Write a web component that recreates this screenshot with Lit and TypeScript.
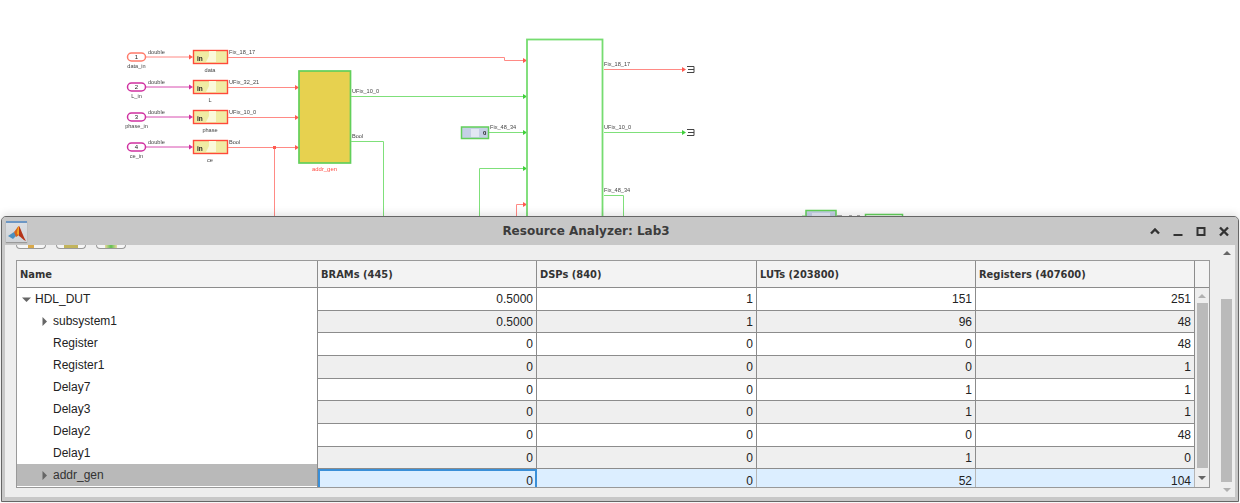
import { LitElement, html, css, svg } from "lit";
import { customElement } from "lit/decorators.js";

const RED = "#ff8a85";
const GRN = "#7fe07a";
const PINK = "#d84fb0";

const arrow = (x: number, y: number, c: string) =>
  svg`<polygon points="${x - 4},${y - 2.5} ${x},${y} ${x - 4},${y + 2.5}" fill="${c}"/>`;
const lbl = (x: number, y: number, t: string, c = "#444", a = "start", s = 5.6) =>
  svg`<text x="${x}" y="${y}" fill="${c}" text-anchor="${a}" font-size="${s}">${t}</text>`;

const inputs = [
  { y: 57, n: "1", name: "data_in", blk: "data", type: "Fix_18_17", pill: "#ff7a6a" },
  { y: 87, n: "2", name: "L_in", blk: "L", type: "UFix_32_21", pill: "#d030a0" },
  { y: 117, n: "3", name: "phase_in", blk: "phase", type: "UFix_10_0", pill: "#d030a0" },
  { y: 147, n: "4", name: "ce_in", blk: "ce", type: "Bool", pill: "#d030a0" },
];

const diagram = svg`
  ${inputs.map(
    (r) => svg`
    <line x1="146" x2="190" y1="${r.y}" y2="${r.y}" stroke="${r.n === "1" ? RED : PINK}"/>
    ${arrow(193, r.y, r.n === "1" ? "#ff5a50" : "#d030a0")}
    <rect x="127.5" y="${r.y - 4}" width="18" height="8" rx="4" fill="#fff" stroke="${r.pill}" stroke-width="1.5"/>
    <text x="136.500" y="${r.y + 2}" text-anchor="middle" font-size="6" fill="#222">${r.n}</text>
    ${lbl(136.5, r.y + 11, r.name, "#444", "middle")}
    ${lbl(148, r.y - 3.5, "double")}
    <rect x="193.5" y="${r.y - 6.5}" width="34" height="13" fill="#f0eca4" stroke="#ff4a3a" stroke-width="1.4"/>
    <path d="M206 ${r.y + 5}l3-6v-5h7v11z" fill="#fbf9dc"/>
    <text x="197" y="${r.y + 3.5}" font-size="6.5" font-weight="700" fill="#222">in</text>
    ${lbl(210, r.y + 15, r.blk, "#444", "middle")}
    ${lbl(229, r.y - 3.5, r.type)}
  `
  )}
  <path d="M228 57.5H504.5V60.5H524M228 87.5H296M228 117.5H296M228 147.5H296M274.5 147.5V220" fill="none" stroke="${RED}"/>
  ${arrow(527, 60.5, "#ff5a50")}${arrow(299, 87.5, "#ff5a50")}${arrow(299, 117.5, "#ff5a50")}${arrow(299, 147.5, "#ff5a50")}
  <rect x="273" y="146" width="3" height="3" fill="#ff5a50"/>
  <rect x="299" y="71" width="51.5" height="92" fill="#e7d14f" stroke="#62cf5a" stroke-width="1.7"/>
  ${lbl(324.5, 170.5, "addr_gen", "#ff4a40", "middle", 5.9)}
  ${lbl(352, 93, "UFix_10_0")}${lbl(352, 138, "Bool")}
  <path d="M351 96.5H524M351 141.5H383.5V220M489 132.5H524M479.5 220V168.5H524M604 195.5H623.5V220M604 132.5H683" fill="none" stroke="${GRN}"/>
  <path d="M604 69.5H683M516.5 220V204.5H524" fill="none" stroke="${RED}"/>
  ${arrow(527, 96.5, "#3fcf3a")}${arrow(527, 132.5, "#3fcf3a")}${arrow(527, 168.5, "#3fcf3a")}${arrow(527, 204.5, "#ff5a50")}
  ${arrow(686, 69.5, "#ff5a50")}${arrow(686, 132.5, "#3fcf3a")}
  <rect x="527" y="39.5" width="75.5" height="182" fill="#fff" stroke="#76dc70" stroke-width="1.8"/>
  <rect x="461.5" y="127" width="27" height="11.5" fill="#c5cfe6" stroke="#62cf5a" stroke-width="1.5"/>
  <rect x="471" y="129" width="8" height="8" fill="#e2e7f3"/>
  <text x="483" y="135" font-size="6" font-weight="700" fill="#222">0</text>
  ${lbl(490, 129, "Fix_48_34")}
  ${lbl(604, 65.5, "Fix_18_17")}${lbl(604, 128.5, "UFix_10_0")}${lbl(604, 191.5, "Fix_48_34")}
  ${[69.5, 132.5].map(
    (y) => svg`<path d="M687 ${y - 3}H694V${y + 3}H687M688 ${y}H694" fill="none" stroke="#444"/>`
  )}
  <rect x="806" y="210.5" width="30" height="12" fill="#c5cfe6" stroke="#62cf5a" stroke-width="1.5"/>
  <rect x="812" y="213" width="18" height="8" fill="#e2e7f3"/>
  <rect x="865.5" y="214.5" width="37" height="8" fill="#fff" stroke="#62cf5a" stroke-width="1.5"/>
  <path d="M802 220V216h4" fill="none" stroke="${GRN}"/>
  <path d="M837 215.5h5M849 215.5h3M857 215.5h3" stroke="#aaa"/>
`;

const names: [string, number, boolean][] = [
  ["HDL_DUT", 0, true],
  ["subsystem1", 1, true],
  ["Register", 1, false],
  ["Register1", 1, false],
  ["Delay7", 1, false],
  ["Delay3", 1, false],
  ["Delay2", 1, false],
  ["Delay1", 1, false],
  ["addr_gen", 1, true],
];

const rows = [
  ["0.5000", "1", "151", "251"],
  ["0.5000", "1", "96", "48"],
  ["0", "0", "0", "48"],
  ["0", "0", "0", "1"],
  ["0", "0", "1", "1"],
  ["0", "0", "1", "1"],
  ["0", "0", "0", "48"],
  ["0", "0", "1", "0"],
  ["0", "0", "52", "104"],
];

@customElement("app-root")
export class AppRoot extends LitElement {
  static styles = css`
    :host {
      display: block;
      position: relative;
      width: 1240px;
      height: 503px;
      overflow: hidden;
      background: #fff;
      font-family: "Liberation Sans", Arial, sans-serif;
    }
    .canvas {
      position: absolute;
      left: 0;
      top: 0;
      font-family: "Liberation Sans", Arial, sans-serif;
      filter: blur(0.25px);
    }
    .win {
      position: absolute;
      left: 1px;
      top: 216px;
      width: 1238px;
      height: 286px;
      box-sizing: border-box;
      border: 1px solid #666;
      border-radius: 5px 5px 0 0;
      background: #c8c8c8;
      box-shadow: 0 -2px 8px rgba(0, 0, 0, 0.12);
      display: flex;
      flex-direction: column;
      overflow: hidden;
    }
    .title {
      height: 28px;
      flex: none;
      display: grid;
      grid-template-columns: 40px 1fr 96px;
      align-items: center;
      background: #c7c7c7;
      position: relative;
      z-index: 1;
    }
    .appicon {
      width: 21px;
      height: 21px;
      margin-left: 4px;
      background: linear-gradient(#6d97c4 0 2px, #dcdfe3 2px, #cfd2d6);
      box-shadow: 0 1px 1px #999;
      display: flex;
    }
    .title-text {
      text-align: center;
      font: 700 12px "DejaVu Sans", sans-serif;
      color: #3c3c3c;
      padding-right: 12px;
    }
    .ctrls {
      display: flex;
      gap: 9px;
      padding-left: 6px;
    }
    .ctrls svg {
      width: 14px;
      height: 14px;
      display: block;
    }
    .body {
      flex: 1;
      margin: 0 3px 4px;
      background: #eee;
      display: flex;
      position: relative;
      padding: 15px 0 0 11px;
      box-sizing: border-box;
    }
    .tools {
      position: absolute;
      top: 0;
      left: 11px;
      display: flex;
      gap: 10px;
    }
    .tool {
      width: 30px;
      height: 4px;
      box-sizing: border-box;
      border: 1px solid #999;
      border-top: 0;
      border-radius: 0 0 5px 5px;
      background: #f6f6f6;
      display: flex;
      justify-content: center;
    }
    .tool i {
      display: block;
      height: 3px;
    }
    .t1 {
      width: 6px;
      background: #d9a94a;
    }
    .t2 {
      width: 14px;
      background: #c2b45c;
    }
    .t3 {
      width: 12px;
      background: linear-gradient(90deg, #e8d9a0, #5fc04f, #e8d9a0);
    }
    .table {
      width: 1194px;
      height: 228px;
      flex: none;
      box-sizing: border-box;
      border: 1px solid #999;
      background: #eee;
      display: grid;
      grid-template-columns: 301px 1fr;
      grid-template-rows: 27px 1fr;
      overflow: hidden;
    }
    .head {
      grid-column: 1 / -1;
      display: grid;
      grid-template-columns: 301px 219px 220px 219px 219px 1fr;
      background: #f3f3f3;
      border-bottom: 1px solid #8c8c8c;
    }
    .head div {
      font: 700 11px "DejaVu Sans Condensed", "DejaVu Sans", sans-serif;
      font-stretch: condensed;
      color: #333;
      display: flex;
      align-items: center;
      padding: 1px 0 0 3px;
      box-sizing: border-box;
      border-right: 1px solid #8c8c8c;
    }
    .head div:last-child {
      border-right: 0;
    }
    .tree {
      background: #fff;
      border-right: 1px solid #8c8c8c;
      box-sizing: border-box;
      font-size: 12px;
      color: #222;
      overflow: hidden;
    }
    .node {
      height: 22px;
      display: flex;
      align-items: center;
      box-sizing: border-box;
    }
    .node.sel {
      background: #b9b9b9;
      color: #333;
    }
    .tw {
      width: 18px;
      flex: none;
      display: flex;
      justify-content: center;
    }
    .d1 {
      padding-left: 18px;
    }
    .right {
      display: grid;
      grid-template-columns: 877px 1fr;
      min-width: 0;
      min-height: 0;
      overflow: hidden;
    }
    .grid {
      display: flex;
      flex-direction: column;
      min-width: 0;
      overflow: hidden;
    }
    .row {
      flex: 0 0 22.68px;
      display: grid;
      grid-template-columns: 219px 220px 219px 219px;
      border-bottom: 1px solid #8c8c8c;
      box-sizing: border-box;
      font-size: 12px;
      color: #222;
      background: #fff;
    }
    .row.alt {
      background: #efefef;
    }
    .row.cur {
      background: #dceeff;
      border-bottom: 0;
    }
    .row div {
      display: flex;
      align-items: center;
      justify-content: flex-end;
      padding-right: 3px;
      box-sizing: border-box;
      border-right: 1px solid #8c8c8c;
    }
    .row.cur div {
      border-right: 1px solid #b5b5b5;
    }
    .row.cur div:first-child {
      outline: 2px solid #3a8fd8;
      outline-offset: -2px;
    }
    .bar {
      background: #eee;
      display: flex;
      flex-direction: column;
      align-items: center;
      padding-top: 6px;
      box-sizing: border-box;
    }
    .thumb {
      width: 11px;
      background: #bababa;
      flex: none;
    }
    .thumb.inner {
      height: 165px;
      margin-top: 5px;
    }
    .up {
      flex: none;
      width: 0;
      height: 0;
      border: 4px solid transparent;
      border-top: 0;
      border-bottom: 4px solid #b0b0b0;
    }
    .down {
      flex: none;
      width: 0;
      height: 0;
      margin-top: 8px;
      border: 4px solid transparent;
      border-bottom: 0;
      border-top: 4px solid #666;
    }
    .outer {
      flex: none;
      width: 13px;
      margin-left: 10px;
      margin-top: -15px;
      display: flex;
      flex-direction: column;
      align-items: center;
      padding-top: 6px;
    }
    .outer .up {
      border-bottom-color: #666;
    }
    .outer .down {
      border-top-color: #b0b0b0;
      margin-top: 6px;
    }
    .thumb.big {
      height: 183px;
      margin-top: 44px;
    }
  `;

  render() {
    return html`
      <svg class="canvas" width="1240" height="225" viewBox="0 0 1240 225" font-family="Liberation Sans, Arial, sans-serif">
        ${diagram}
      </svg>
      <section class="win">
        <header class="title">
          <div class="appicon">
            <svg width="21" height="21" viewBox="0 0 21 21">
              <path d="M2 15l6-4 3 3-4 4z" fill="#4a8fc0"/>
              <path d="M8 11c2-2 3-5 5-6l2 8-5 3z" fill="#d8641c"/>
              <path d="M13 5c1 1 4 10 7 15-3-1-5-4-7-5z" fill="#b5341a"/>
              <path d="M13 5c-1.500 2-2 5-2 8l2 1z" fill="#f5a623"/>
            </svg>
          </div>
          <div class="title-text">Resource Analyzer: Lab3</div>
          <div class="ctrls">
            <svg viewBox="0 0 14 14"><path d="M3 9.500l4-4 4 4" fill="none" stroke="#333" stroke-width="2.400"/></svg>
            <svg viewBox="0 0 14 14"><path d="M2.500 11h9" stroke="#333" stroke-width="2"/></svg>
            <svg viewBox="0 0 14 14"><rect x="3.500" y="4" width="7" height="7" fill="none" stroke="#333" stroke-width="2"/></svg>
            <svg viewBox="0 0 14 14"><path d="M3 3.500l8 8M11 3.500l-8 8" stroke="#333" stroke-width="2.400"/></svg>
          </div>
        </header>
        <div class="body">
          <div class="tools">
            <div class="tool"><i class="t1"></i></div>
            <div class="tool"><i class="t2"></i></div>
            <div class="tool"><i class="t3"></i></div>
          </div>
          <div class="table">
            <div class="head">
              <div>Name</div><div>BRAMs (445)</div><div>DSPs (840)</div><div>LUTs (203800)</div><div>Registers (407600)</div><div></div>
            </div>
            <div class="tree">
              ${names.map(
                ([n, d, exp], i) => html`
                  <div class="node d${d} ${i === 8 ? "sel" : ""}">
                    <span class="tw">
                      ${exp
                        ? i === 0
                          ? html`<svg width="9" height="9"><path d="M0 2.500h9L4.500 7z" fill="#666"/></svg>`
                          : html`<svg width="9" height="9"><path d="M2.500 0v9L7 4.500z" fill="#666"/></svg>`
                        : ""}
                    </span>
                    <span>${n}</span>
                  </div>
                `
              )}
            </div>
            <div class="right">
              <div class="grid">
                ${rows.map(
                  (r, i) => html`
                    <div class="row ${i % 2 ? "alt" : ""} ${i === 8 ? "cur" : ""}">
                      ${r.map((c) => html`<div>${c}</div>`)}
                    </div>
                  `
                )}
              </div>
              <div class="bar">
                <span class="up"></span>
                <span class="thumb inner"></span>
                <span class="down"></span>
              </div>
            </div>
          </div>
          <div class="outer">
            <span class="up"></span>
            <span class="thumb big"></span>
            <span class="down"></span>
          </div>
        </div>
      </section>
    `;
  }
}
